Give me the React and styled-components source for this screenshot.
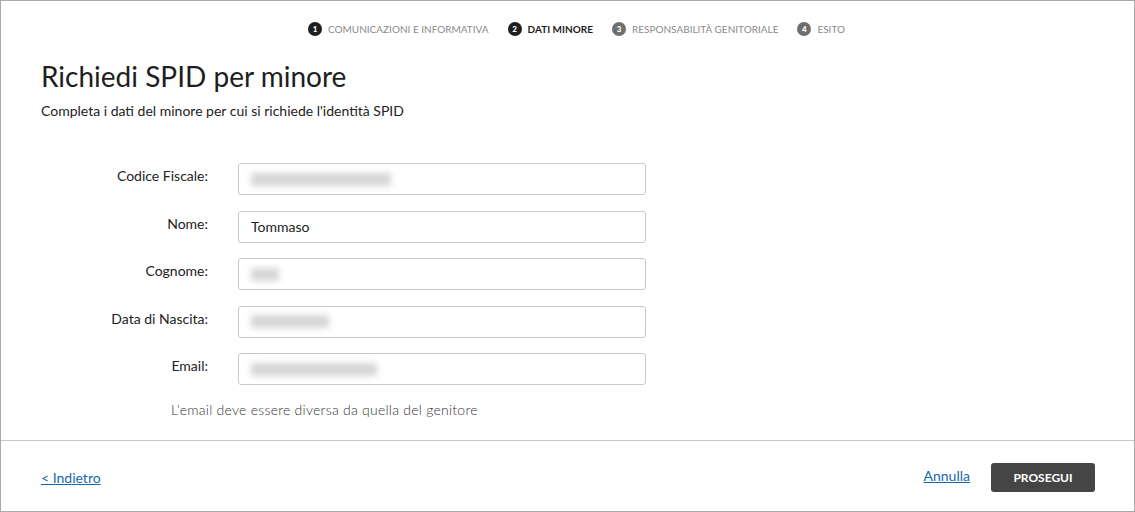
import React from "react";
import styled, { createGlobalStyle } from "styled-components";

const GlobalStyle = createGlobalStyle`
  html, body {
    margin: 0;
    padding: 0;
    background: #fff;
  }
  body {
    font-family: Lato, "Open Sans", sans-serif;
    color: #222;
  }
`;

const steps = [
  { n: 1, label: "Comunicazioni e informativa", state: "done" },
  { n: 2, label: "Dati minore", state: "active" },
  { n: 3, label: "Responsabilità genitoriale", state: "todo" },
  { n: 4, label: "Esito", state: "todo" },
];

const fields = [
  { label: "Codice Fiscale:", blur: 140 },
  { label: "Nome:", value: "Tommaso" },
  { label: "Cognome:", blur: 28 },
  { label: "Data di Nascita:", blur: 78 },
  { label: "Email:", blur: 126 },
];

const App = () => {
  return (
    <>
      <GlobalStyle />
      <Frame>
        <Main>
          <Stepper>
            {steps.map((s) => (
              <Step key={s.n}>
                <StepNum $state={s.state}>{s.n}</StepNum>
                <StepLabel $state={s.state}>{s.label}</StepLabel>
              </Step>
            ))}
          </Stepper>
          <Title>Richiedi SPID per minore</Title>
          <Subtitle>
            Completa i dati del minore per cui si richiede l'identità SPID
          </Subtitle>
          <Form>
            {fields.map((f) => (
              <Row key={f.label}>
                <Label>{f.label}</Label>
                <Input>
                  {f.value ? f.value : <Blurred style={{ width: f.blur }} />}
                </Input>
              </Row>
            ))}
            <Hint>L'email deve essere diversa da quella del genitore</Hint>
          </Form>
        </Main>
        <Footer>
          <Link href="#">&lt; Indietro</Link>
          <Actions>
            <Link href="#" $offset={-2}>
              Annulla
            </Link>
            <Button>Prosegui</Button>
          </Actions>
        </Footer>
      </Frame>
    </>
  );
};
export default App;

const Frame = styled.div`
  box-sizing: border-box;
  width: 1135px;
  height: 512px;
  border: 1px solid #a9a9a9;
  display: flex;
  flex-direction: column;
`;
const Main = styled.div`
  flex: 1;
  padding: 0 40px;
  border-bottom: 1px solid #c8c8c8;
`;
const Stepper = styled.div`
  display: flex;
  justify-content: center;
  gap: 19px;
  padding-top: 20px;
  height: 16px;
  align-items: center;
  margin-left: 18px;
`;
const Step = styled.div`
  display: flex;
  align-items: center;
  gap: 6px;
`;
const StepNum = styled.span`
  width: 14px;
  height: 14px;
  border-radius: 50%;
  background: ${(p) => (p.$state === "todo" ? "#6f6f6f" : "#1e1e1e")};
  color: #fff;
  font-size: 8px;
  font-weight: 900;
  display: flex;
  align-items: center;
  justify-content: center;
`;
const StepLabel = styled.span`
  text-transform: uppercase;
  font-size: 10px;
  color: ${(p) => (p.$state === "active" ? "#1e1e1e" : "#8a8a8a")};
  font-weight: ${(p) => (p.$state === "active" ? 700 : 400)};
`;
const Title = styled.h1`
  margin: 22px 0 0;
  font-size: 28px;
  font-weight: 400;
  line-height: 34px;
  color: #1e1e1e;
`;
const Subtitle = styled.p`
  margin: 9px 0 0;
  font-size: 14px;
  line-height: 18px;
  color: #222;
`;
const Form = styled.div`
  margin-top: 43px;
  display: flex;
  flex-direction: column;
  gap: 15.5px;
`;
const Row = styled.div`
  display: grid;
  grid-template-columns: 167px 408px;
  column-gap: 30px;
  align-items: start;
`;
const Label = styled.div`
  text-align: right;
  font-size: 14px;
  line-height: 18px;
  padding-top: 4px;
  color: #222;
`;
const Input = styled.div`
  box-sizing: border-box;
  height: 32px;
  border: 1px solid #c9c9c9;
  border-radius: 3px;
  padding: 0 12px;
  display: flex;
  align-items: center;
  font-size: 14px;
  color: #222;
`;
const Blurred = styled.span`
  display: block;
  height: 13px;
  background: #d6d6d6;
  filter: blur(3px);
`;
const Hint = styled.div`
  margin: 0 0 0 130px;
  font-size: 14px;
  font-weight: 300;
  letter-spacing: 0.25px;
  color: #333;
`;
const Footer = styled.div`
  height: 70px;
  padding: 0 39px 0 40px;
  display: flex;
  align-items: center;
  justify-content: space-between;
`;
const Actions = styled.div`
  display: flex;
  align-items: center;
  gap: 21px;
`;
const Link = styled.a`
  position: relative;
  top: ${(p) => p.$offset || 0}px;
  font-size: 14px;
  color: #1668b0;
  text-decoration: underline;
  margin-top: 2px;
`;
const Button = styled.button`
  width: 104px;
  height: 29px;
  border: none;
  border-radius: 3px;
  background: #454545;
  color: #fff;
  font-family: Lato, sans-serif;
  font-size: 12px;
  font-weight: 700;
  text-transform: uppercase;
  margin-top: 2px;
`;
